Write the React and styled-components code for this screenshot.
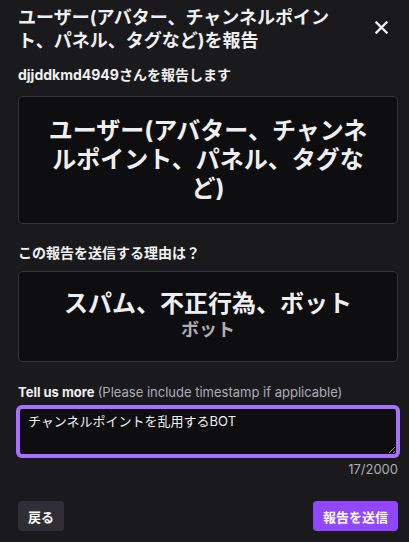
import React, { useState } from 'react';
import styled, { createGlobalStyle } from 'styled-components';

const GlobalStyle = createGlobalStyle`
  html, body {
    margin: 0;
    padding: 0;
    background-color: #1a1a1d;
  }

  body {
    font-family: "Inter", "Noto Sans CJK JP", sans-serif;
    color: #efeff1;
  }
`;

const Modal = styled.div`
  width: 409px;
  height: 542px;
  box-sizing: border-box;
  padding: 6px 11px 10px 18px;
  display: flex;
  flex-flow: column nowrap;
  background-color: #1a1a1d;
`;

const Header = styled.div`
  display: flex;
  flex-flow: row nowrap;
  justify-content: space-between;
  align-items: flex-start;
`;

const Title = styled.h2`
  width: 325px;
  margin: 0;
  font-size: 18px;
  line-height: 23px;
  font-weight: 700;
  color: #efeff1;
`;

const CloseButton = styled.button`
  width: 30px;
  height: 30px;
  margin: 6px 2px 0 0;
  padding: 0;
  border: none;
  border-radius: 4px;
  background: transparent;
  display: flex;
  align-items: center;
  justify-content: center;
  cursor: pointer;
`;

const Label = styled.div`
  margin-top: ${props => props.top || 0}px;
  font-size: ${props => props.size || 13}px;
  line-height: 18px;
  font-weight: 700;
  color: #efeff1;
`;

const Hint = styled.span`
  font-weight: 400;
  color: #adadb8;
`;

const Panel = styled.div`
  margin-top: ${props => props.top || 0}px;
  padding: ${props => props.pad || '20px 24px'};
  border: 1px solid #34343a;
  border-radius: 5px;
  background-color: #0e0e10;
  display: flex;
  flex-flow: column nowrap;
  align-items: center;
  text-align: center;
`;

const BigText = styled.div`
  font-size: 24px;
  line-height: 29px;
  font-weight: 700;
  color: #efeff1;
`;

const SubText = styled.div`
  font-size: 18px;
  line-height: 24px;
  font-weight: 700;
  color: #adadb8;
`;

const TextArea = styled.textarea`
  margin-top: 6px;
  height: 49px;
  box-sizing: border-box;
  padding: 4px 8px;
  border: 2px solid #a970ff;
  box-shadow: 0 0 0 2px #a970ff;
  border-radius: 4px;
  background-color: #0e0e10;
  color: #efeff1;
  font-family: "Inter", "Noto Sans CJK JP", sans-serif;
  font-size: 13px;
  line-height: 16px;
  resize: vertical;

  :focus {
    outline: none;
  }
`;

const Counter = styled.div`
  margin-top: 4px;
  text-align: right;
  font-size: 13px;
  line-height: 18px;
  color: #adadb8;
`;

const Footer = styled.div`
  margin-top: 23px;
  display: flex;
  flex-flow: row nowrap;
  justify-content: space-between;
`;

const Button = styled.button`
  height: 30px;
  padding: 0 10px;
  border: none;
  border-radius: 4px;
  background-color: ${props => (props.primary ? '#9147ff' : '#2f2f35')};
  color: #ffffff;
  font-family: "Inter", "Noto Sans CJK JP", sans-serif;
  font-size: 13px;
  font-weight: 700;
  cursor: pointer;
`;

function App() {
  const [details, setDetails] = useState('チャンネルポイントを乱用するBOT');

  return (
    <Modal>
      <GlobalStyle />
      <Header>
        <Title>ユーザー(アバター、チャンネルポイント、パネル、タグなど)を報告</Title>
        <CloseButton aria-label="閉じる">
          <svg width="13" height="13" viewBox="0 0 13 13">
            <path d="M1.5 1.5 L11.5 11.5 M11.5 1.5 L1.5 11.5" stroke="#efeff1" strokeWidth="2.4" strokeLinecap="square" />
          </svg>
        </CloseButton>
      </Header>

      <Label top={14} size={14}>djjddkmd4949さんを報告します</Label>
      <Panel top={12} pad="19px 24px 20px">
        <BigText>ユーザー(アバター、チャンネルポイント、パネル、タグなど)</BigText>
      </Panel>

      <Label top={20} size={14}>この報告を送信する理由は？</Label>
      <Panel top={9} pad="17px 24px 19px">
        <BigText>スパム、不正行為、ボット</BigText>
        <SubText>ボット</SubText>
      </Panel>

      <Label top={21}>
        Tell us more <Hint>(Please include timestamp if applicable)</Hint>
      </Label>
      <TextArea value={details} onChange={event => setDetails(event.target.value)} />
      <Counter>{details.length}/2000</Counter>

      <Footer>
        <Button type='button'>戻る</Button>
        <Button type='button' primary>報告を送信</Button>
      </Footer>
    </Modal>
  );
}

export default App;
